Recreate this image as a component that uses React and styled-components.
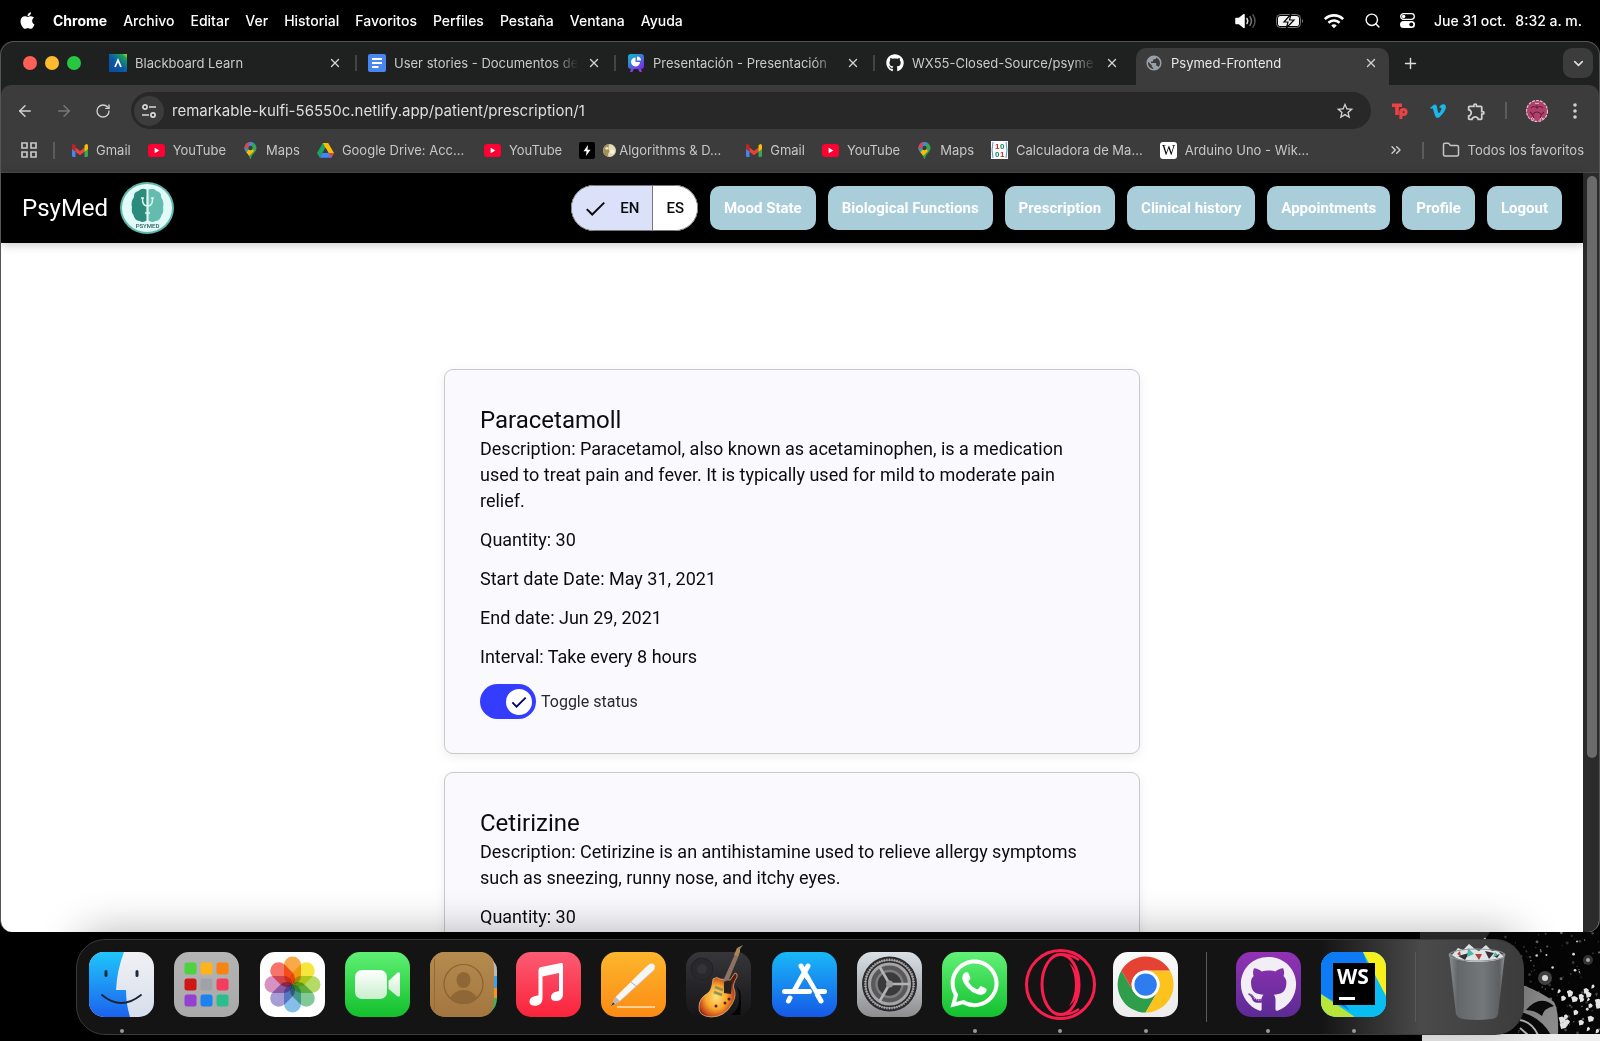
import React, { useState } from "react";
import styled, { createGlobalStyle, css } from "styled-components";
import { FaApple, FaGithub, FaVimeoV, FaWhatsapp } from "react-icons/fa";
import {
  ArrowLeft,
  ArrowRight,
  ChevronDown,
  ChevronsRight,
  Folder,
  Plus,
  RotateCw,
  Search,
  X,
} from "lucide-react";
import { MdOutlineExtension, MdOutlineStarBorder, MdPublic, MdWifi } from "react-icons/md";

const GlobalStyle = createGlobalStyle`
  *, *::before, *::after { box-sizing: border-box; }
  body { margin: 0; background: #000; }
  button, input { font: inherit; color: inherit; }
  button { margin: 0; padding: 0; border: 0; background: none; cursor: pointer; }
  a { color: inherit; text-decoration: none; }
  svg { display: block; flex: none; }
  h2, p { margin: 0; }
`;

const uiFont = css`
  font-family: Inter, "Noto Sans", sans-serif;
`;

/* ---------- Desktop ---------- */

const Desktop = styled.div`
  ${uiFont}
  display: flex;
  flex-direction: column;
  height: 100vh;
  overflow: hidden;
  background: #000;
`;

const MenuBar = styled.header`
  flex: none;
  height: 41px;
  display: flex;
  align-items: center;
  justify-content: space-between;
  padding: 0 18px;
  color: #fff;
  font-size: 14px;
  line-height: 20px;
`;

const MenuList = styled.nav`
  display: flex;
  align-items: center;
  gap: 16px;
`;

const MenuItem = styled.button`
  font-weight: ${(p) => (p.$strong ? 700 : 500)};
`;

const StatusList = styled.div`
  display: flex;
  align-items: center;
  gap: 19px;
`;

const Clock = styled.time`
  display: flex;
  gap: 9px;
  font-weight: 500;
`;

/* ---------- Browser window ---------- */

const Window = styled.section`
  flex: 1;
  min-height: 0;
  display: flex;
  flex-direction: column;
  overflow: hidden;
  border: 1px solid #555;
  border-bottom-width: 0;
  border-radius: 14px 14px 12px 12px;
  background: #1f2120;
`;

const TabStrip = styled.div`
  flex: none;
  height: 43px;
  display: flex;
  align-items: flex-end;
  padding-right: 6px;
`;

const Lights = styled.div`
  flex: none;
  align-self: center;
  display: flex;
  gap: 8px;
  width: 96px;
  padding: 0 0 2px 22px;
`;

const Light = styled.button`
  width: 14px;
  height: 14px;
  border-radius: 50%;
  background: ${(p) => p.$color};
`;

const Tab = styled.div`
  flex: 0 1 259px;
  min-width: 0;
  height: 37px;
  display: flex;
  align-items: center;
  gap: 8px;
  padding: 0 13px 8px 12px;
  color: #c9c9c9;
  font-size: 13px;
  line-height: 18px;
  ${(p) =>
    p.$active &&
    css`
      border-radius: 10px 10px 0 0;
      background: #3c3c3c;
      color: #e8e8e8;
      flex-basis: 253px;
      margin-left: 3px;
      box-shadow: 0 20px 0 #3c3c3c;
      padding-left: 9px;
      padding-right: 10px;
    `}
`;

const TabTitle = styled.a`
  flex: 1;
  min-width: 0;
  overflow: hidden;
  white-space: nowrap;
  mask-image: linear-gradient(90deg, #000 calc(100% - 24px), transparent);
`;

const TabDivider = styled.span`
  flex: none;
  width: 2px;
  height: 16px;
  margin: 0 -1px 14px;
  background: #444;
`;

const StripButton = styled.button`
  flex: none;
  display: grid;
  place-items: center;
  width: 30px;
  height: 30px;
  margin-bottom: 7px;
  border-radius: 9px;
  color: #ddd;
  background: ${(p) => (p.$filled ? "#3c3c3c" : "transparent")};
  margin-left: ${(p) => (p.$filled ? "auto" : "6px")};
`;

const IconButton = styled.button`
  flex: none;
  display: grid;
  place-items: center;
  width: ${(p) => p.$size || 16}px;
  height: ${(p) => p.$size || 16}px;
  color: ${(p) => p.$color || "#d0d0d0"};
`;

const Toolbar = styled.div`
  flex: none;
  display: flex;
  align-items: center;
  height: 51px;
  padding: 0 16px 0 15px;
  background: #3c3c3c;
  border-radius: 10px 10px 0 0;
`;

const ToolGroup = styled.div`
  display: flex;
  align-items: center;
  gap: ${(p) => p.$gap}px;
`;

const AddressBox = styled.label`
  flex: 1;
  min-width: 0;
  display: flex;
  align-items: center;
  gap: 8px;
  height: 37px;
  margin: 0 19px;
  padding: 0 16px 0 3px;
  border-radius: 19px;
  background: #282828;
`;

const SiteBadge = styled.span`
  display: grid;
  place-items: center;
  width: 30px;
  height: 30px;
  border-radius: 50%;
  background: #3c3c3c;
`;

const AddressInput = styled.input`
  flex: 1;
  min-width: 0;
  padding: 0;
  border: 0;
  outline: 0;
  background: none;
  color: #dedede;
  font-size: 15px;
  line-height: 20px;
`;

const Divider = styled.span`
  flex: none;
  width: 2px;
  height: 17px;
  background: #5c5c5c;
`;

const BookmarkBar = styled.nav`
  flex: none;
  display: flex;
  align-items: center;
  gap: 17px;
  height: 37px;
  padding: 0 15px 8px 20px;
  background: #3c3c3c;
  border-bottom: 1px solid #4a4a4a;
  color: #c6c6c6;
  font-size: 13px;
  line-height: 18px;
`;

const BookmarkLead = styled.div`
  display: flex;
  align-items: center;
  gap: 16px;
`;

const BookmarkLink = styled.a`
  display: flex;
  align-items: center;
  gap: 8px;
  min-width: ${(p) => (p.$wide ? "150px" : "0")};
  white-space: nowrap;
`;

const BookmarkTitle = styled.span`
  display: flex;
  align-items: center;
  gap: 3px;
`;

const BookmarkTail = styled.div`
  display: flex;
  align-items: center;
  gap: 18px;
  margin-left: auto;
`;

const Viewport = styled.div`
  flex: 1;
  min-height: 0;
  display: flex;
  background: #fff;
`;

const ScrollTrack = styled.div`
  flex: none;
  width: 16px;
  padding: 3px 2px 0 4px;
  background: #2b2b2b;
`;

const ScrollThumb = styled.div`
  height: 77%;
  border-radius: 5px;
  background: #6b6b6b;
`;

/* ---------- PsyMed page ---------- */

const Page = styled.div`
  flex: 1;
  min-width: 0;
  display: flex;
  flex-direction: column;
  font-family: Roboto, "Noto Sans", sans-serif;
  color: #0c0c0f;
`;

const SiteHeader = styled.header`
  flex: none;
  z-index: 1;
  display: flex;
  align-items: center;
  justify-content: space-between;
  height: 70px;
  padding: 0 21px;
  background: #000;
  box-shadow: 0 2px 9px rgba(0, 0, 0, 0.22);
`;

const Brand = styled.a`
  display: flex;
  align-items: center;
  gap: 12px;
  color: #fff;
  font-size: 24px;
  line-height: 32px;
`;

const SiteNav = styled.nav`
  display: flex;
  align-items: center;
  gap: 12px;
`;

const LanguageGroup = styled.fieldset`
  display: flex;
  height: 46px;
  margin: 0;
  padding: 0;
  overflow: hidden;
  border: 1px solid #76767c;
  border-radius: 23px;
  background: #fff;
`;

const LanguageOption = styled.label`
  display: flex;
  align-items: center;
  gap: 14px;
  padding: 0 13px;
  font-size: 15px;
  font-weight: 500;
  line-height: 22px;
  cursor: pointer;
  background: ${(p) => (p.$checked ? "#dbe1f9" : "#fff")};
  & + & {
    border-left: 1px solid #76767c;
  }
`;

const LanguageRadio = styled.input`
  appearance: none;
  width: 0;
  height: 0;
  margin: 0 -14px 0 0;
`;

const NavButton = styled.button`
  height: 44px;
  padding: 0 14px;
  border-radius: 10px;
  background: #a9cdd9;
  color: #fff;
  font-size: 15px;
  font-weight: 700;
  line-height: 22px;
  white-space: nowrap;
`;

const Content = styled.main`
  flex: 1;
  min-height: 0;
  overflow-y: auto;
  scrollbar-width: none;
  padding: 126px 24px 40px;
`;

const CardList = styled.div`
  display: flex;
  flex-direction: column;
  gap: 18px;
  max-width: 696px;
  margin: 0 auto;
`;

const Card = styled.article`
  padding: 35px 35px 34px;
  border: 1px solid #c9c9cc;
  border-radius: 9px;
  background: #faf9fe;
  box-shadow: 0 3px 12px rgba(0, 0, 0, 0.07);
`;

const CardTitle = styled.h2`
  font-size: 24px;
  font-weight: 400;
  line-height: 31px;
`;

const CardLine = styled.p`
  font-size: 18px;
  line-height: 26px;
  & + & {
    margin-top: 13px;
  }
`;

const SwitchRow = styled.label`
  display: flex;
  align-items: center;
  gap: 5px;
  margin-top: 14px;
  color: #2a2a2e;
  font-size: 16px;
  line-height: 22px;
`;

const SwitchBox = styled.span`
  display: grid;
  align-items: center;
  & > * {
    grid-area: 1 / 1;
  }
  & > svg {
    justify-self: ${(p) => (p.$on ? "end" : "start")};
    margin: 0 9px;
    pointer-events: none;
    color: #00006e;
  }
`;

const SwitchInput = styled.input`
  appearance: none;
  display: flex;
  align-items: center;
  width: 56px;
  height: 35px;
  margin: 0;
  padding: 0 4px;
  border-radius: 18px;
  background: #343dff;
  cursor: pointer;
  &::before {
    content: "";
    width: 26px;
    height: 26px;
    border-radius: 50%;
    background: #fff;
  }
  &:checked {
    justify-content: flex-end;
  }
  &:not(:checked) {
    background: #8a8a94;
  }
`;

/* ---------- Dock ---------- */

const DockArea = styled.footer`
  flex: none;
  position: relative;
  padding: 7px 76px 6px;
`;

const Wallpaper = styled.svg`
  position: absolute;
  right: 0;
  bottom: 0;
`;

const DockPanel = styled.div`
  position: relative;
  display: flex;
  align-items: flex-start;
  justify-content: space-between;
  height: 96px;
  padding: 12px 14px 0 12px;
  border: 1px solid #3a3a3a;
  border-radius: 29px;
  background: linear-gradient(90deg, #141414 0, #141414 86%, #4a4a4a 93%, #3c3c3c 100%);
  box-shadow: 0 -6px 44px rgba(0, 0, 0, 0.3);
`;

const DockItem = styled.button`
  display: flex;
  flex-direction: column;
  align-items: center;
  gap: 12px;
  width: 65px;
  & > svg {
    overflow: visible;
  }
`;

const RunningDot = styled.span`
  width: 4px;
  height: 4px;
  border-radius: 50%;
  background: #9a9a9a;
`;

const DockDivider = styled.span`
  width: 1px;
  height: 70px;
  margin: 0 8px;
  background: #5a5a5a;
`;

/* ---------- Small icons ---------- */

const VolumeIcon = () => (
  <svg width="22" height="16" viewBox="0 0 22 16" fill="none" strokeWidth="1.5" strokeLinecap="round">
    <path d="M1 5.6h3L9 1.6v12.8l-5-4H1z" fill="#fff" stroke="#fff" strokeLinejoin="round" />
    <path d="M12 5.5q1.6 2.5 0 5" stroke="#ddd" />
    <path d="M15 3.6q2.8 4.4 0 8.8" stroke="#777" />
    <path d="M18 1.8q4 6.2 0 12.4" stroke="#555" />
  </svg>
);

const BatteryIcon = () => (
  <svg width="28" height="14" viewBox="0 0 28 14">
    <rect x="0.5" y="0.5" width="24" height="13" rx="4" fill="none" stroke="#777" />
    <rect x="2" y="2" width="21" height="10" rx="2.6" fill="#f2f2f2" />
    <path d="M26 5q2 2 0 4z" fill="#888" />
    <path d="M15 0 8 8h4l-1.600 6L18 6h-4.500z" fill="#f2f2f2" stroke="#000" strokeWidth="1.200" />
  </svg>
);

const ControlIcon = () => (
  <svg width="15" height="15" viewBox="0 0 15 15">
    <rect x="0.700" y="0.700" width="13.600" height="5.600" rx="2.800" fill="none" stroke="#fff" strokeWidth="1.300" />
    <circle cx="3.600" cy="3.500" r="1.800" fill="#fff" />
    <rect x="0" y="8" width="15" height="7" rx="3.500" fill="#fff" />
    <circle cx="11.300" cy="11.500" r="2" fill="#000" />
  </svg>
);

const BlackboardIcon = () => (
  <svg width="18" height="18" viewBox="0 0 18 18">
    <defs>
      <linearGradient id="bb" x1="1" y1="0" x2="0.200" y2="0.900">
        <stop offset="0" stopColor="#b8d42a" />
        <stop offset="0.200" stopColor="#18a05c" />
        <stop offset="0.600" stopColor="#0b5aa8" />
        <stop offset="1" stopColor="#0a4f9c" />
      </linearGradient>
    </defs>
    <rect width="18" height="18" fill="url(#bb)" />
    <path d="M6 13 9 6.200 12 13" fill="none" stroke="#fff" strokeWidth="1.800" />
  </svg>
);

const DocsIcon = () => (
  <svg width="18" height="18" viewBox="0 0 18 18">
    <rect width="18" height="18" rx="2" fill="#4a86f0" />
    <path d="M4 5h10M4 9h10M4 13h6.500" stroke="#fff" strokeWidth="2" />
  </svg>
);

const PresentationIcon = () => (
  <svg width="18" height="18" viewBox="0 0 18 18">
    <defs>
      <linearGradient id="pr" x1="0" y1="0" x2="0.800" y2="1">
        <stop offset="0" stopColor="#00c4cc" />
        <stop offset="1" stopColor="#7d2ae8" />
      </linearGradient>
    </defs>
    <path d="m6 14-2 4M12 14l2 4" stroke="#8b3df0" strokeWidth="2.400" />
    <rect x="1" y="0" width="16" height="15" rx="3" fill="url(#pr)" />
    <path d="M8.500 3.400A4.500 4.500 0 1 0 13 8H8.500z" fill="#fff" />
    <path d="M10 2.400A4 4 0 0 1 14 6.500h-4z" fill="#fff" />
  </svg>
);

const TuneIcon = () => (
  <svg width="16" height="16" viewBox="0 0 16 16" fill="none" stroke="#d8d8d8" strokeWidth="1.700">
    <circle cx="4" cy="4" r="2.100" />
    <path d="M8 4h7M1 12h7" />
    <circle cx="12" cy="12" r="2.100" />
  </svg>
);

const AppsIcon = () => (
  <svg width="16" height="16" viewBox="0 0 16 16" fill="none" stroke="#c6c6c6" strokeWidth="1.700">
    <path d="M1 1h5v5H1zM10 1h5v5h-5zM1 10h5v5H1zM10 10h5v5h-5z" />
  </svg>
);

const GmailIcon = () => (
  <svg width="16" height="13" viewBox="0 0 16 13">
    <path d="M0 2v9.500Q0 13 1.500 13h2V4z" fill="#4285f4" />
    <path d="M16 2v9.500q0 1.500-1.500 1.500h-2V4z" fill="#34a853" />
    <path d="M3.500 3.600 8 7l4.500-3.400v4.200L8 11.200 3.500 7.800z" fill="#ea4335" />
    <path d="M0 2q0-2.600 2.500-1.600l1 .8v6.600L0 5z" fill="#c5221f" />
    <path d="M16 2q0-2.600-2.500-1.600l-1 .8v6.600L16 5z" fill="#fbbc04" />
  </svg>
);

const YouTubeIcon = () => (
  <svg width="17" height="13" viewBox="0 0 17 13">
    <rect width="17" height="13" rx="3" fill="#f03" />
    <path d="M6.600 3.700v5.600l4.800-2.800z" fill="#fff" />
  </svg>
);

const MapsIcon = () => (
  <svg width="15" height="17" viewBox="-1 0 15 17">
    <defs>
      <clipPath id="pin">
        <path d="M6.500 0A6 6 0 0 0 .5 6c0 4.200 4.600 5.400 5.400 10.300q.6 1 1.200 0C7.900 11.400 12.500 10.200 12.500 6a6 6 0 0 0-6-6z" />
      </clipPath>
    </defs>
    <g clipPath="url(#pin)">
      <path d="M0 0h13v17H0z" fill="#34a853" />
      <path d="M0 12 13-3H0z" fill="#4285f4" />
      <path d="M0 0h6L3 7-2 5z" fill="#ea4335" />
      <path d="m1 12 6-7 3 4-6 6z" fill="#fbbc04" />
      <circle cx="6.500" cy="6" r="2.200" fill="#3c3c3c" />
    </g>
  </svg>
);

const DriveIcon = () => (
  <svg width="17" height="15" viewBox="0 0 17 15">
    <path d="M5.800 0h5.400L5.500 10 2.800 14.700 0 10z" fill="#1ea362" />
    <path d="M5.800 0h5.400L17 10h-5.500z" fill="#fbbc04" />
    <path d="M5.500 10H17l-2.700 4.700H2.800z" fill="#4285f4" />
    <path d="M11.500 10H17l-2.700 4.700z" fill="#ea4335" />
    <path d="M8.500 4.800 11.500 10h-6z" fill="#3c3c3c" />
  </svg>
);

const BoltTile = () => (
  <svg width="16" height="17" viewBox="0 0 16 17">
    <rect width="16" height="17" rx="2" fill="#000" />
    <path d="M9 3 4.500 9.300h3L7 14l4.500-6.300h-3z" fill="#fff" />
  </svg>
);

const CoinIcon = () => (
  <svg width="13" height="13" viewBox="0 0 12 12">
    <circle cx="6" cy="6" r="6" fill="#e6dcb6" />
    <path d="M6 0a6 6 0 0 0-1 11.900q-1-3 1-5-2-3 0-6.900z" fill="#a08f58" />
    <circle cx="3.500" cy="4" r="1.300" fill="#efe6c4" />
    <circle cx="8.500" cy="7" r="2" fill="#f7f2de" />
  </svg>
);

const MatrixIcon = () => (
  <svg width="17" height="18" viewBox="0 0 17 18" fontFamily="Liberation Sans, sans-serif" fontWeight="700" fontSize="8">
    <rect width="17" height="18" fill="#fff" />
    <path d="M2 1Q0 9 2 17M15 1q2 8 0 16" fill="none" stroke="#4a90c8" />
    <text x="4" y="8" fill="#d22">1</text>
    <text x="9" y="8" fill="#185">0</text>
    <text x="4" y="16" fill="#185">0</text>
    <text x="9" y="16" fill="#d22">1</text>
  </svg>
);

const WikiIcon = () => (
  <svg width="17" height="17" viewBox="0 0 17 17">
    <rect width="17" height="17" rx="3" fill="#fff" />
    <text x="8.500" y="13" textAnchor="middle" fontFamily="Liberation Serif, serif" fontSize="14" fill="#000">W</text>
  </svg>
);

const TypingIcon = () => (
  <svg width="18" height="18" viewBox="0 0 18 18" fill="none" stroke="#ee4144" strokeWidth="3.600">
    <path d="M1 3.300h10M6 3v10" />
    <circle cx="12.500" cy="10" r="2.600" strokeWidth="3" />
    <path d="M9.900 9v8" strokeWidth="3" />
  </svg>
);

const AvatarIcon = () => (
  <svg width="22" height="22" viewBox="0 0 22 22">
    <circle cx="11" cy="11" r="10.500" fill="#b0416a" stroke="#e3bcc8" strokeWidth="1.200" strokeDasharray="3 1" />
    <path d="M5 8q3-3 6 0 3-3 6 0M7 14q4-4 8 0M4 12q3 2 4 6M18 12q-3 2-4 6M11 4v4" fill="none" stroke="#6d1c3c" strokeWidth="1.100" />
    <path d="M5 19q2-3 3 1M14 20q1-4 3-1M9 3q2 2 4 0" fill="none" stroke="#f0c6d2" />
  </svg>
);

const MoreIcon = () => (
  <svg width="4" height="16" viewBox="0 0 4 16" fill="#d0d0d0">
    <circle cx="2" cy="2" r="1.800" />
    <circle cx="2" cy="8" r="1.800" />
    <circle cx="2" cy="14" r="1.800" />
  </svg>
);

const CheckMark = ({ size, width }) => (
  <svg width={size} height={size} viewBox="0 0 18 18" fill="none" stroke="currentColor" strokeWidth={width}>
    <path d="m1.500 9.500 4.700 4.700L16.500 4" />
  </svg>
);

const PsyMedLogo = () => (
  <svg width="54" height="52" viewBox="0 0 54 52">
    <ellipse cx="27" cy="26" rx="27" ry="26" fill="#5fb8ab" />
    <ellipse cx="27" cy="26" rx="25" ry="24" fill="#e3fbf8" />
    <path d="M26.500 7.500q-5-2-8 1.500-5 1-4.500 6-3.500 5-2 10-1 5 1.500 8 1 5.500 6 6 4 2 7-.5z" fill="#2b8b7d" />
    <path d="M28.500 7.500q5-2 8 1.500 5 1 4.500 6 3.500 5 2 10 1 5-1.500 8-1 5.500-6 6-4 2-7-.5z" fill="#63bcae" />
    <path d="M22.500 16q-.5 8 5 8t5-8M27.500 14v20M25 31h5M21 16h3M31 16h3" fill="none" stroke="#d9f6f0" strokeWidth="1.500" />
    <text x="27.500" y="46" textAnchor="middle" fontFamily="Roboto, sans-serif" fontWeight="500" fontSize="6" fill="#2f5f5a">
      PSYMED
    </text>
  </svg>
);

/* ---------- Dock icons ---------- */

const Gradient = ({ id, from, to }) => (
  <linearGradient id={id} x1="0" y1="0" x2="0" y2="1">
    <stop offset="0" stopColor={from} />
    <stop offset="1" stopColor={to} />
  </linearGradient>
);

const Tile = ({ id, from, to, children }) => (
  <svg width="65" height="65" viewBox="0 0 65 65">
    <defs>
      <Gradient id={id} from={from} to={to} />
      <clipPath id={`${id}-clip`}>
        <rect width="65" height="65" rx="15" />
      </clipPath>
    </defs>
    <rect width="65" height="65" rx="15" fill={`url(#${id})`} />
    {children}
  </svg>
);

const FinderIcon = () => (
  <Tile id="finder" from="#f1f1f4" to="#d6deec">
    <defs>
      <Gradient id="finder-blue" from="#1fc6fb" to="#1c62ee" />
    </defs>
    <g clipPath="url(#finder-clip)">
      <path d="M0 0h35Q28 18 27 38h10q0 14 4 27H0z" fill="url(#finder-blue)" />
    </g>
    <path d="M17 19.500v4M48 19.500v4" stroke="#1d2c3c" strokeWidth="3" strokeLinecap="round" />
    <path d="M13 43q19 16 39 0" fill="none" stroke="#1d2430" strokeWidth="1.800" strokeLinecap="round" />
  </Tile>
);

const launchColors = ["#4cd33f", "#fdb41b", "#f78411", "#cf1717", "#9fa3a9", "#f43d5c", "#9440d1", "#1b82f0", "#2cbd8e"];

const LaunchpadIcon = () => (
  <Tile id="launch" from="#b4b4b4" to="#a9a9a9">
    {launchColors.map((color, i) => (
      <rect key={color} x={10.5 + (i % 3) * 16} y={10.5 + Math.floor(i / 3) * 16} width="12" height="12" rx="2.500" fill={color} />
    ))}
  </Tile>
);

const petalColors = ["#f99a28", "#f4e21a", "#a9d54a", "#6ac188", "#6fb4e6", "#978bcf", "#d07fb8", "#f75b4f"];

const PhotosIcon = () => (
  <Tile id="photos" from="#fff" to="#fff">
    {petalColors.map((color, i) => (
      <rect
        key={color}
        x="24"
        y="4.500"
        width="17"
        height="28"
        rx="8.500"
        fill={color}
        opacity="0.850"
        transform={`rotate(${i * 45} 32.5 32.500)`}
        style={{ mixBlendMode: "multiply" }}
      />
    ))}
  </Tile>
);

const FaceTimeIcon = () => (
  <Tile id="facetime" from="#5ff074" to="#12bf2c">
    <defs>
      <Gradient id="camera" from="#fff" to="#c9efcd" />
    </defs>
    <rect x="10" y="18" width="32" height="29" rx="7" fill="url(#camera)" />
    <path d="M43.500 29 52 21q3-2 3 1v21q0 3-3 1l-8.500-7z" fill="url(#camera)" />
  </Tile>
);

const ContactsIcon = () => (
  <Tile id="contacts" from="#b58b4f" to="#a3763f">
    <path d="M61 8q6 3 6 10v6h-6z" fill="#b9b9b9" />
    <path d="M61 24h6v12h-6z" fill="#3f9fe8" />
    <path d="M61 36h6v10h-6z" fill="#f79321" />
    <path d="M61 46h6q0 9-6 13z" fill="#3bb557" />
    <rect width="64" height="65" rx="15" fill="url(#contacts)" />
    <path d="M4.500 7v51" stroke="#936a38" strokeWidth="1" />
    <circle cx="33.500" cy="32" r="19.500" fill="none" stroke="#8a6231" strokeWidth="1.200" />
    <ellipse cx="33.500" cy="28" rx="7" ry="8" fill="#8f6635" />
    <path d="M20 46q5-8 13.500-8T47 46q-6 6-13.500 6T20 46z" fill="#8f6635" />
  </Tile>
);

const MusicIcon = () => (
  <Tile id="music" from="#fc5c74" to="#fa233b">
    <path
      d="M23 15.500 45 11q2-.4 2 1.600V42q0 6-6 7-6 .6-6-4 0-4 5-5.200l3-.8V21l-16.500 3.400V46q0 6.600-6 7.800-7 .6-7-4.300 0-4 5-5.300l4-1V18q0-2 1.500-2.500z"
      fill="#fff"
    />
  </Tile>
);

const PagesIcon = () => (
  <Tile id="pages" from="#fdb62d" to="#fb8b14">
    <path d="M16 55h38" stroke="#ffe6c0" strokeWidth="1.600" />
    <path d="m10 54 4.500-9L46 14q4-3.500 6.500-2t.5 6L19 49z" fill="#f6f6f6" />
    <path d="m14.500 45 4.500 4-9 5z" fill="#b9b9b9" />
    <path d="m10 54 2-3.800 1.800 1.800z" fill="#333" />
    <path d="m30 30 6 5" stroke="#aaa" />
    <path d="M19 49 53 18" stroke="#c9c9c9" />
  </Tile>
);

const GarageBandIcon = () => (
  <Tile id="garage" from="#37373b" to="#151517">
    <defs>
      <radialGradient id="guitar" cx="0.450" cy="0.550" r="0.550">
        <stop offset="0" stopColor="#ffe27a" />
        <stop offset="0.500" stopColor="#f9a62c" />
        <stop offset="0.850" stopColor="#c2401a" />
        <stop offset="1" stopColor="#5b1a0c" />
      </radialGradient>
    </defs>
    <circle cx="16" cy="17" r="11" fill="#29292d" stroke="#222226" />
    <circle cx="16" cy="17" r="5" fill="#333338" />
    <path d="M47 30q8 8 6 20-1 8-8 13h9q2-12 0-24z" fill="#050505" />
    <path
      d="M27 27q4-3 7 0l10 1 5-7q3 0 2 4-5 8-3 12 3 6-2 15-7 13-21 13-13-1-12-10 0-9 9-14 4-3 5-14z"
      fill="url(#guitar)"
      stroke="#e9c38a"
      strokeWidth="0.700"
    />
    <path d="M37 29 49 2l4 1-12 29z" fill="#8d7263" />
    <path d="m48 3 3-7 6-3-3 4 0 3-2 4z" fill="#a98755" />
    <path d="M38 30q4-3 8 0l-1 12-7-1z" fill="#25211f" />
    <path d="m29 35 8 3M28 40l8 3" stroke="#8f9250" strokeWidth="2.500" />
    <circle cx="39" cy="51" r="1.500" fill="#5b2210" />
    <circle cx="43" cy="47" r="1.500" fill="#5b2210" />
    <circle cx="30" cy="54" r="1.500" fill="#5b2210" />
  </Tile>
);

const AppStoreIcon = () => (
  <Tile id="store" from="#19b8f8" to="#1659e6">
    <g stroke="#fff" strokeWidth="5" strokeLinecap="round" fill="none">
      <path d="M36 14 22 39M18 46l-1.500 3M29 14l20 35M12.500 39.500h25M45 39.500h7.500" />
    </g>
    <path d="m34 28 9 15" stroke="#1b84ee" strokeWidth="1" />
  </Tile>
);

const teeth = Array.from({ length: 60 }, (_, i) => i * 6);

const SettingsIcon = () => (
  <Tile id="settings" from="#d9e0e6" to="#8e8e90">
    <circle cx="32.500" cy="32" r="27.500" fill="#2b2b2d" />
    <circle cx="32.500" cy="32" r="24" fill="none" stroke="#8b8b8d" strokeWidth="1.500" />
    {teeth.map((a) => (
      <path key={a} d="M32.500 6.500v2.500" stroke="#a9a9ab" strokeWidth="1.200" transform={`rotate(${a} 32.5 32)`} />
    ))}
    <circle cx="32.500" cy="32" r="20" fill="#59595b" stroke="#a5a5a7" strokeWidth="3" />
    <circle cx="32.500" cy="32" r="13" fill="#3a3a3c" stroke="#7c7c7e" strokeWidth="2.500" />
    <path d="M32.500 32h20M32.500 32l-10-17.500M32.500 32l-10 17.500" stroke="#b4b4b6" strokeWidth="2.600" />
    <circle cx="32.500" cy="32" r="3.500" fill="#99999b" />
  </Tile>
);

const WhatsAppIcon = () => (
  <Tile id="whatsapp" from="#62f177" to="#12c02e">
    <FaWhatsapp x="5" y="4" size="55" color="#fff" />
  </Tile>
);

const OperaIcon = () => (
  <svg width="65" height="65" viewBox="0 0 65 65" fill="none" stroke="#fa1e4e">
    <ellipse cx="32.500" cy="32.500" rx="34" ry="34" strokeWidth="3" />
    <ellipse cx="32.500" cy="32.500" rx="18.500" ry="30" strokeWidth="3" />
    <path d="M28 3q14-2 23 5M28 62q14 2 23-5" strokeWidth="2.500" />
    <path d="M41 11q10 8 10 21.500T41 54q6-9 6-21.500T41 11z" fill="#fa1e4e" stroke="none" />
  </svg>
);

const chromeSector = "M24 14H41.320A20 20 0 0 0 6.680 14L15.340 29A10 10 0 0 1 24 14Z";

const ChromeIcon = () => (
  <Tile id="chrome" from="#fafafa" to="#ececec">
    <g transform="translate(-1 -1) scale(1.4)">
      <path d={chromeSector} fill="#2f9e4b" transform="rotate(240 24 24)" />
      <path d={chromeSector} fill="#fcc31e" transform="rotate(120 24 24)" />
      <path d={chromeSector} fill="#e64234" />
      <circle cx="24" cy="24" r="10" fill="#fff" />
      <circle cx="24" cy="24" r="8" fill="#2f7bf0" />
    </g>
  </Tile>
);

const GitHubDesktopIcon = () => (
  <Tile id="github" from="#9232b4" to="#5c2b95">
    <FaGithub x="4" y="4" size="57" color="#f1eef6" />
  </Tile>
);

const WebStormIcon = () => (
  <Tile id="webstorm" from="#0b7cf5" to="#00c0f4">
    <g clipPath="url(#webstorm-clip)">
      <path d="M0 0h65v65H0z" fill="#0bbdf2" />
      <path d="M0 0h42l10 30-12 35L0 42z" fill="#0c7bf4" />
      <path d="M42 0h23v44z" fill="#f8f01c" />
      <path d="M0 42l34 23H0z" fill="#b9e53a" />
      <path d="M22 50h43v15H34z" fill="#07bdf2" />
    </g>
    <rect x="12" y="11" width="42" height="42" fill="#000" />
    <text x="16" y="32" fontFamily="Open Sans, sans-serif" fontWeight="700" fontSize="21" fill="#fff">
      WS
    </text>
    <path d="M18 46.500h16" stroke="#fff" strokeWidth="3" />
  </Tile>
);

const TrashIcon = () => (
  <svg width="65" height="65" viewBox="0 0 65 65">
    <defs>
      <linearGradient id="glass" x1="0" x2="1" y1="0" y2="0">
        <stop offset="0" stopColor="#8b8f92" />
        <stop offset="0.150" stopColor="#63676a" />
        <stop offset="0.600" stopColor="#74787b" />
        <stop offset="0.900" stopColor="#5c6063" />
        <stop offset="1" stopColor="#92969a" />
      </linearGradient>
    </defs>
    <path d="M5 1q28 10 56 0l-7 61q-1 5-7 5-14 2-28 0-6-1-7-5z" fill="url(#glass)" />
    <path d="m8 3 6-7 5 2 6-6 6 5 4 2 7-6 6 6 6 0 6 6q-5 4-24 5T8 3z" fill="#dfe5e6" />
    <path d="m14 4 7 4 4-7zM41-1l4 8 5-6zM50 4l3 2 3-4z" fill="#3a3035" />
    <path d="m24-4 6 6-7 3zM51 0l3 3-5 2z" fill="#4fb7a8" />
    <path d="m31 2 4 6 3-6zM13 2l4 2-1-5z" fill="#b0413c" />
    <ellipse cx="33" cy="3" rx="28" ry="6" fill="none" stroke="#8f9396" strokeWidth="1" />
  </svg>
);

const noise = (n) => {
  const v = Math.sin(n * 127.1) * 43758.5453;
  return v - Math.floor(v);
};

const stars = Array.from({ length: 170 }, (_, i) => ({
  x: 60 + noise(i + 1) * 120,
  y: noise(i + 301) * 102,
  r: 0.4 + noise(i + 601) * 1.1,
  shade: ["#ddd", "#666", "#333", "#444"][i % 4],
}));

const flakes = Array.from({ length: 26 }, (_, i) => ({
  x: 138 + noise(i + 901) * 40,
  y: 50 + noise(i + 951) * 50,
  size: 1 + noise(i + 990) * 3,
}));

const WallpaperArt = () => (
  <Wallpaper width="180" height="109" viewBox="0 0 180 109" aria-hidden="true">
    <rect width="180" height="109" fill="#050505" />
    <path d="M0 0h70l-6 9H0z" fill="#303030" />
    {stars.map((s, i) => (
      <circle key={i} cx={s.x} cy={s.y} r={s.r} fill={s.shade} />
    ))}
    <circle cx="125" cy="46" r="7" fill="#444" />
    <circle cx="125" cy="46" r="3" fill="#e6e6e6" />
    <circle cx="168" cy="28" r="5" fill="#333" />
    <circle cx="168" cy="28" r="2" fill="#aaa" />
    <path d="M100 52q22 8 34 18 5 8 4 33h-38z" fill="#8c8c8c" />
    <path d="M106 78q14-16 28-4-10 2-12 10-7-6-16-6z" fill="#0a0a0a" />
    <path d="M100 80q20 4 31 23h-31z" fill="#0a0a0a" />
    <path d="M100 88q12 2 18 15M100 96l8 7" stroke="#bbb" strokeWidth="2" fill="none" />
    {flakes.map((f, i) => (
      <path key={i} d={`M${f.x} ${f.y}l${f.size} -1 ${f.size} 2 -1 ${f.size} -${f.size + 1} 1z`} fill="#e4e4e4" />
    ))}
    <rect x="2" y="102" width="178" height="7" fill="#efefef" />
  </Wallpaper>
);

/* ---------- Data ---------- */

const menus = ["Archivo", "Editar", "Ver", "Historial", "Favoritos", "Perfiles", "Pestaña", "Ventana", "Ayuda"];

const tabs = [
  { title: "Blackboard Learn", icon: <BlackboardIcon /> },
  { title: "User stories - Documentos de", icon: <DocsIcon /> },
  { title: "Presentación - Presentación", icon: <PresentationIcon /> },
  { title: "WX55-Closed-Source/psyme", icon: <FaGithub size="18" color="#fff" /> },
  { title: "Psymed-Frontend", icon: <MdPublic size="18" color="#9aa0a6" />, active: true },
];

const bookmarks = [
  { title: "Gmail", icon: <GmailIcon /> },
  { title: "YouTube", icon: <YouTubeIcon /> },
  { title: "Maps", icon: <MapsIcon /> },
  { title: "Google Drive: Acc...", icon: <DriveIcon />, wide: true },
  { title: "YouTube", icon: <YouTubeIcon /> },
  { title: "Algorithms & D...", icon: <BoltTile />, emblem: <CoinIcon />, wide: true },
  { title: "Gmail", icon: <GmailIcon /> },
  { title: "YouTube", icon: <YouTubeIcon /> },
  { title: "Maps", icon: <MapsIcon /> },
  { title: "Calculadora de Ma...", icon: <MatrixIcon />, wide: true },
  { title: "Arduino Uno - Wik...", icon: <WikiIcon />, wide: true },
];

const sections = ["Mood State", "Biological Functions", "Prescription", "Clinical history", "Appointments", "Profile", "Logout"];

const prescriptions = [
  {
    name: "Paracetamoll",
    description:
      "Paracetamol, also known as acetaminophen, is a medication used to treat pain and fever. It is typically used for mild to moderate pain relief.",
    quantity: 30,
    start: "May 31, 2021",
    end: "Jun 29, 2021",
    interval: "Take every 8 hours",
  },
  {
    name: "Cetirizine",
    description:
      "Cetirizine is an antihistamine used to relieve allergy symptoms such as sneezing, runny nose, and itchy eyes.",
    quantity: 30,
  },
];

const dock = [
  { name: "Finder", icon: <FinderIcon />, running: true },
  { name: "Launchpad", icon: <LaunchpadIcon /> },
  { name: "Photos", icon: <PhotosIcon /> },
  { name: "FaceTime", icon: <FaceTimeIcon /> },
  { name: "Contacts", icon: <ContactsIcon /> },
  { name: "Music", icon: <MusicIcon /> },
  { name: "Pages", icon: <PagesIcon /> },
  { name: "GarageBand", icon: <GarageBandIcon /> },
  { name: "App Store", icon: <AppStoreIcon /> },
  { name: "System Settings", icon: <SettingsIcon /> },
  { name: "WhatsApp", icon: <WhatsAppIcon />, running: true },
  { name: "Opera", icon: <OperaIcon />, running: true },
  { name: "Chrome", icon: <ChromeIcon />, running: true },
  null,
  { name: "GitHub Desktop", icon: <GitHubDesktopIcon />, running: true },
  { name: "WebStorm", icon: <WebStormIcon />, running: true },
  null,
  { name: "Trash", icon: <TrashIcon /> },
];

/* ---------- Components ---------- */

function Prescription({ item }) {
  const [on, setOn] = useState(true);
  return (
    <Card>
      <CardTitle>{item.name}</CardTitle>
      <CardLine>{`Description: ${item.description}`}</CardLine>
      <CardLine>{`Quantity: ${item.quantity}`}</CardLine>
      {item.start && <CardLine>{`Start date Date: ${item.start}`}</CardLine>}
      {item.end && <CardLine>{`End date: ${item.end}`}</CardLine>}
      {item.interval && <CardLine>{`Interval: ${item.interval}`}</CardLine>}
      <SwitchRow>
        <SwitchBox $on={on}>
          <SwitchInput type="checkbox" role="switch" checked={on} onChange={(e) => setOn(e.target.checked)} />
          {on && <CheckMark size={16} width={2} />}
        </SwitchBox>
        Toggle status
      </SwitchRow>
    </Card>
  );
}

function LanguageSwitch() {
  const [language, setLanguage] = useState("EN");
  return (
    <LanguageGroup aria-label="Language">
      {["EN", "ES"].map((code) => (
        <LanguageOption key={code} $checked={language === code}>
          <LanguageRadio type="radio" name="language" checked={language === code} onChange={() => setLanguage(code)} />
          {language === code && <CheckMark size={21} width={1.7} />}
          {code}
        </LanguageOption>
      ))}
    </LanguageGroup>
  );
}

export default function App() {
  const [address, setAddress] = useState("remarkable-kulfi-56550c.netlify.app/patient/prescription/1");
  return (
    <>
      <GlobalStyle />
      <Desktop>
        <MenuBar>
          <MenuList aria-label="Menu">
            <FaApple size="19" />
            <MenuItem $strong>Chrome</MenuItem>
            {menus.map((m) => (
              <MenuItem key={m}>{m}</MenuItem>
            ))}
          </MenuList>
          <StatusList>
            <VolumeIcon />
            <BatteryIcon />
            <MdWifi size="22" />
            <Search size={17} />
            <ControlIcon />
            <Clock>
              <span>Jue 31 oct.</span>
              <span>8:32 a. m.</span>
            </Clock>
          </StatusList>
        </MenuBar>

        <Window>
          <TabStrip>
            <Lights>
              <Light $color="#fe5f57" aria-label="Close window" />
              <Light $color="#febb2e" aria-label="Minimize window" />
              <Light $color="#27c840" aria-label="Zoom window" />
            </Lights>
            {tabs.map((t, i) => (
              <React.Fragment key={t.title}>
                <Tab $active={t.active}>
                  {t.icon}
                  <TabTitle href="#">{t.title}</TabTitle>
                  <IconButton aria-label={`Close ${t.title}`}>
                    <X size={14} strokeWidth={2.4} />
                  </IconButton>
                </Tab>
                {i < 3 && <TabDivider />}
              </React.Fragment>
            ))}
            <StripButton aria-label="New tab">
              <Plus size={17} />
            </StripButton>
            <StripButton $filled aria-label="Search tabs">
              <ChevronDown size={15} strokeWidth={2.6} />
            </StripButton>
          </TabStrip>

          <Toolbar>
            <ToolGroup $gap={21}>
              <IconButton $size={18} aria-label="Back">
                <ArrowLeft size={18} />
              </IconButton>
              <IconButton $size={18} $color="#777" aria-label="Forward">
                <ArrowRight size={18} />
              </IconButton>
              <IconButton $size={18} aria-label="Reload">
                <RotateCw size={16} />
              </IconButton>
            </ToolGroup>
            <AddressBox>
              <SiteBadge>
                <TuneIcon />
              </SiteBadge>
              <AddressInput aria-label="Address" value={address} onChange={(e) => setAddress(e.target.value)} />
              <IconButton $size={20} aria-label="Bookmark this page">
                <MdOutlineStarBorder size="20" />
              </IconButton>
            </AddressBox>
            <ToolGroup $gap={19}>
              <IconButton $size={20} aria-label="Typing extension">
                <TypingIcon />
              </IconButton>
              <IconButton $size={18} $color="#1ab7ea" aria-label="Vimeo extension">
                <FaVimeoV size="18" />
              </IconButton>
              <IconButton $size={20} aria-label="Extensions">
                <MdOutlineExtension size="21" />
              </IconButton>
              <Divider />
              <IconButton $size={22} aria-label="Profile">
                <AvatarIcon />
              </IconButton>
              <IconButton $size={16} aria-label="More">
                <MoreIcon />
              </IconButton>
            </ToolGroup>
          </Toolbar>

          <BookmarkBar aria-label="Bookmarks">
            <BookmarkLead>
              <AppsIcon />
              <Divider />
            </BookmarkLead>
            {bookmarks.map((b, i) => (
              <BookmarkLink key={i} href="#" $wide={b.wide}>
                {b.icon}
                <BookmarkTitle>
                  {b.emblem}
                  {b.title}
                </BookmarkTitle>
              </BookmarkLink>
            ))}
            <BookmarkTail>
              <IconButton aria-label="More bookmarks">
                <ChevronsRight size={16} />
              </IconButton>
              <Divider />
              <BookmarkLink href="#">
                <Folder size={18} />
                <span>Todos los favoritos</span>
              </BookmarkLink>
            </BookmarkTail>
          </BookmarkBar>

          <Viewport>
            <Page>
              <SiteHeader>
                <Brand href="#">
                  PsyMed
                  <PsyMedLogo />
                </Brand>
                <SiteNav>
                  <LanguageSwitch />
                  {sections.map((s) => (
                    <NavButton key={s}>{s}</NavButton>
                  ))}
                </SiteNav>
              </SiteHeader>
              <Content>
                <CardList>
                  {prescriptions.map((p) => (
                    <Prescription key={p.name} item={p} />
                  ))}
                </CardList>
              </Content>
            </Page>
            <ScrollTrack>
              <ScrollThumb />
            </ScrollTrack>
          </Viewport>
        </Window>

        <DockArea>
          <WallpaperArt />
          <DockPanel>
            {dock.map((d, i) =>
              d ? (
                <DockItem key={d.name} aria-label={d.name}>
                  {d.icon}
                  {d.running && <RunningDot />}
                </DockItem>
              ) : (
                <DockDivider key={i} />
              )
            )}
          </DockPanel>
        </DockArea>
      </Desktop>
    </>
  );
}
